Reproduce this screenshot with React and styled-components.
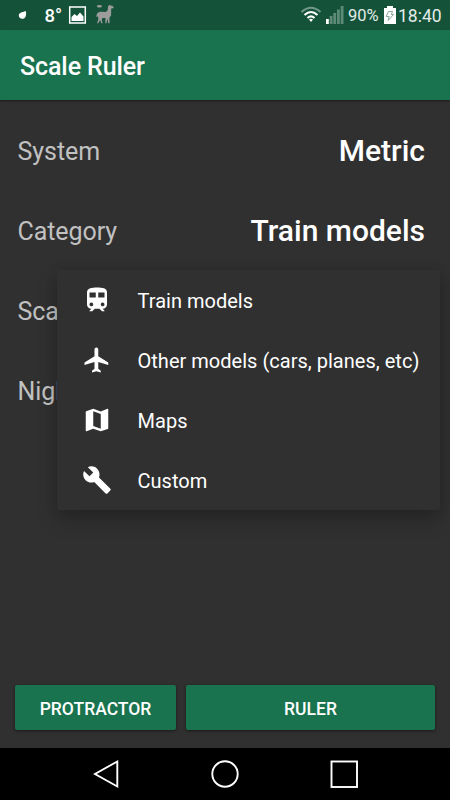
import React from "react";
import styled, { createGlobalStyle } from "styled-components";
import { MdTrain, MdFlight, MdMap, MdBuild } from "react-icons/md";

const GlobalStyle = createGlobalStyle`
  * { box-sizing: border-box; }
  body { margin: 0; background: #303030; }
`;

const Screen = styled.div`
  position: relative;
  display: flex;
  flex-direction: column;
  width: 450px;
  height: 800px;
  overflow: hidden;
  background: #303030;
  color: #fff;
  font-family: Roboto, sans-serif;
`;

const StatusBar = styled.header`
  display: flex;
  justify-content: space-between;
  flex: none;
  height: 30px;
  background: #14533a;
`;

const StatusGroup = styled.div`
  display: flex;
  align-items: center;
  height: 30px;
`;

const StatusIcon = styled.svg`
  flex: none;
  width: ${(p) => p.$w}px;
  height: 30px;
`;

const StatusText = styled.span`
  flex: none;
  width: ${(p) => p.$w}px;
  font-size: ${(p) => p.$size}px;
  font-weight: ${(p) => p.$weight || 400};
  line-height: 30px;
  padding-top: 1px;
  white-space: nowrap;
  color: ${(p) => p.$color || "#e3ebe7"};
`;

const AppBar = styled.div`
  z-index: 1;
  display: flex;
  align-items: center;
  flex: none;
  height: 70px;
  padding: 4px 20px 0;
  background: #1a734f;
  box-shadow: 0 1px 2px rgba(0, 0, 0, 0.45);
`;

const Title = styled.h1`
  margin: 0;
  font-size: 25px;
  font-weight: 500;
  line-height: 30px;
  letter-spacing: -0.1px;
`;

const Settings = styled.main`
  flex: 1;
  padding: 11px 25px 0 17.5px;
`;

const SettingRow = styled.div`
  display: flex;
  align-items: center;
  justify-content: space-between;
  height: 80px;
`;

const SettingLabel = styled.span`
  font-size: 25px;
  letter-spacing: -0.06px;
  color: #c1c1c1;
`;

const SettingValue = styled.span`
  padding-bottom: 1px;
  font-size: 30px;
  font-weight: 500;
`;

const Menu = styled.ul`
  position: absolute;
  top: 270px;
  left: 57px;
  width: 383px;
  margin: 0;
  padding: 0;
  list-style: none;
  background: #303030;
  border-radius: 2px;
  box-shadow: 0 10px 20px rgba(0, 0, 0, 0.22), 0 0 12px rgba(0, 0, 0, 0.1);
`;

const MenuItem = styled.li`
  display: flex;
  align-items: center;
  gap: 25.5px;
  height: 60px;
  padding-left: 25px;
  font-size: 20px;
  white-space: nowrap;

  svg { flex: none; width: 30px; height: 30px; }
`;

const MenuLabel = styled.span`
  padding-top: 2px;
  letter-spacing: 0.02px;
`;

const Actions = styled.div`
  display: flex;
  gap: 10px;
  flex: none;
  padding: 0 15px 18px;
`;

const ActionButton = styled.button`
  width: ${(p) => p.$w}px;
  height: 45px;
  padding: 2px 0 0;
  border: 0;
  border-radius: 2px;
  background: #1a734f;
  color: #fff;
  font: 500 17.5px Roboto, sans-serif;
  box-shadow: 0 1px 3px rgba(0, 0, 0, 0.5);
`;

const NavBar = styled.nav`
  display: flex;
  align-items: center;
  justify-content: center;
  gap: 89px;
  flex: none;
  height: 52px;
  background: #000;

  svg { width: 30px; height: 30px; fill: none; stroke: #fff; stroke-width: 1.9; }
`;

const settings = [
  { label: "System", value: "Metric" },
  { label: "Category", value: "Train models" },
  { label: "Scale" },
  { label: "Night mode" },
];

const categories = [
  { icon: MdTrain, label: "Train models" },
  { icon: MdFlight, label: "Other models (cars, planes, etc)" },
  { icon: MdMap, label: "Maps" },
  { icon: MdBuild, label: "Custom" },
];

const Notifications = () => (
  <StatusGroup>
    <StatusIcon $w={44.5} viewBox="0 0 44.5 30">
      <path d="M25.800 11c.9 4.200-.2 7.800-3.600 7.800-2 0-3.400-1.400-3.400-3.300 0-2.800 3-3 7-4.500z" fill="#fff" />
    </StatusIcon>
    <StatusText $w={22.500} $size={18.500} $weight={500} $color="#fff">8°</StatusText>
    <StatusIcon $w={25} viewBox="67 0 25 30">
      <rect x="69.700" y="7" width="15.600" height="16" fill="none" stroke="#fff" strokeWidth="1.500" />
      <path d="M71.500 21v-4l3-3 2.500 2 3-3.500 3.500 4V21z" fill="#fff" />
    </StatusIcon>
    <StatusIcon $w={30} viewBox="92 0 30 30">
      <g fill="#9c9c9c">
        <ellipse cx="99.400" cy="6.300" rx="2.600" ry="1.200" />
        <path d="M108 6.500l1.300-1.700 1 .8 2 .2 1.500 1.500-.6 1-2 .1-.1 7.100-1.700 2.300.2 5.400h-1.300l-1-4.500-.8 4.500h-1.200l.2-5.200-3-.1-.8 1.800.9 3.500h-1.300l-1.300-3.300-1.700 3.300h-1.200l1.300-4.400-.4-2.500-1.200.8-.5-.8c.5-2.700 1.500-4.500 4-4.600l5.700.3 1.700-2z" />
      </g>
    </StatusIcon>
  </StatusGroup>
);

const signalBars = [
  { x: 326, y: 19, h: 5, on: true },
  { x: 329.7, y: 16, h: 8 },
  { x: 333.3, y: 13, h: 11 },
  { x: 337, y: 9.5, h: 14.5 },
  { x: 340.7, y: 6, h: 18 },
];

const DeviceStatus = () => (
  <StatusGroup>
    <StatusIcon $w={24} viewBox="300 0 24 30">
      <g fill="none" strokeWidth="2.100">
        <path d="M301.500 12q9.500-8.500 19 0" stroke="#72988a" />
        <path d="M304.500 15q6.500-6 13 0" stroke="#fff" />
        <path d="M307.500 18q3.500-3.300 7 0" stroke="#fff" />
      </g>
      <path d="M309 19.500q2-1.500 4 0l-2 2.500z" fill="#fff" />
    </StatusIcon>
    <StatusIcon $w={24} viewBox="324 0 24 30">
      {signalBars.map((b) => (
        <rect key={b.x} x={b.x} y={b.y} width="2.800" height={b.h} fill={b.on ? "#fff" : "#5d8b78"} />
      ))}
    </StatusIcon>
    <StatusText $w={35} $size={16.500}>90%</StatusText>
    <StatusIcon $w={15} viewBox="383 0 15 30">
      <path d="M384 8h3V6h6v2h3v16h-12z" fill="#fff" />
      <path d="M388.500 11.500h4l-1.200 3h2.200l-5.300 6 1-4h-3z" fill="none" stroke="#789b8d" strokeWidth=".9" />
    </StatusIcon>
    <StatusText $w={52} $size={17.500}>18:40</StatusText>
  </StatusGroup>
);

export default function App() {
  return (
    <>
      <GlobalStyle />
      <Screen>
        <StatusBar>
          <Notifications />
          <DeviceStatus />
        </StatusBar>
        <AppBar><Title>Scale Ruler</Title></AppBar>
        <Settings>
          {settings.map(({ label, value }) => (
            <SettingRow key={label}>
              <SettingLabel>{label}</SettingLabel>
              {value && <SettingValue>{value}</SettingValue>}
            </SettingRow>
          ))}
        </Settings>
        <Menu>
          {categories.map(({ icon: Icon, label }) => (
            <MenuItem key={label}>
              <Icon />
              <MenuLabel>{label}</MenuLabel>
            </MenuItem>
          ))}
        </Menu>
        <Actions>
          <ActionButton $w={161}>PROTRACTOR</ActionButton>
          <ActionButton $w={249}>RULER</ActionButton>
        </Actions>
        <NavBar>
          <svg viewBox="0 0 30 30"><path d="M26.300 2.500v25L4 15z" /></svg>
          <svg viewBox="0 0 30 30"><circle cx="15" cy="15" r="12.700" /></svg>
          <svg viewBox="0 0 30 30"><rect x="2.500" y="2.500" width="25.500" height="25.500" /></svg>
        </NavBar>
      </Screen>
    </>
  );
}
